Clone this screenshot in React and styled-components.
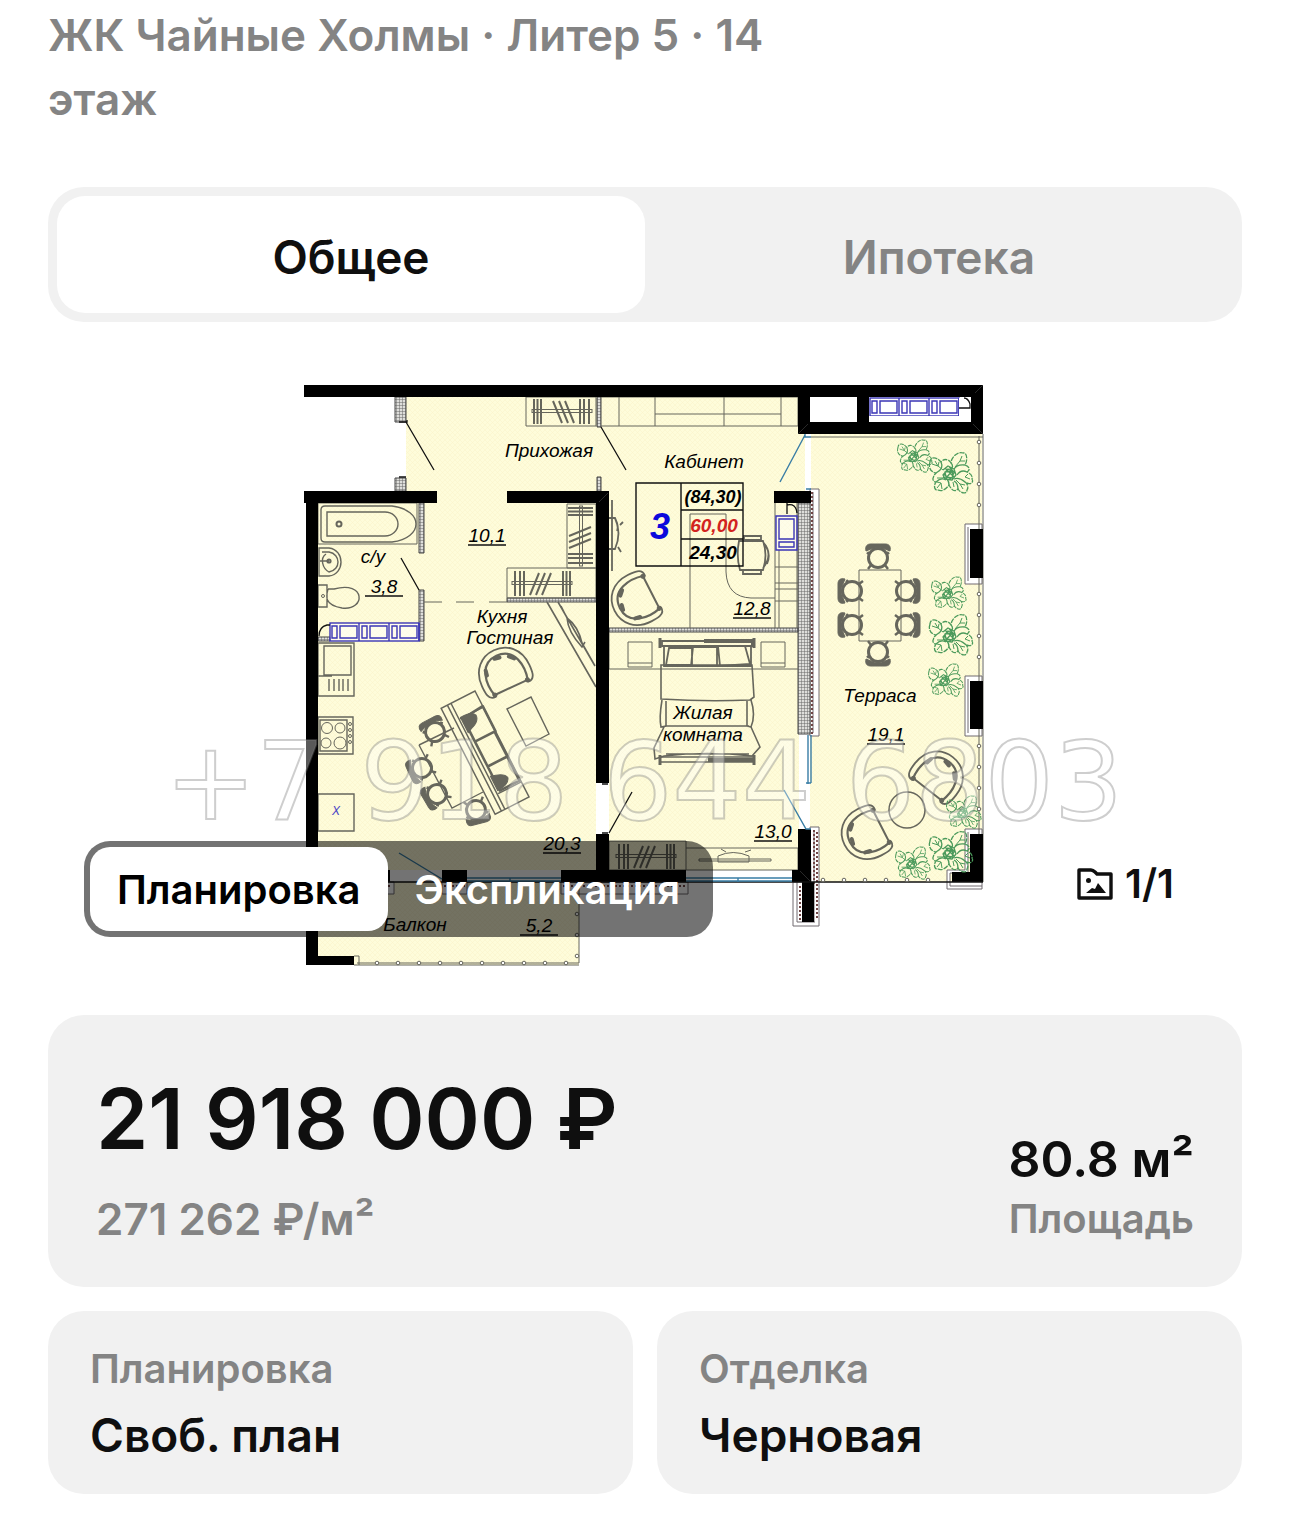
import React, { useState } from "react";
import styled, { createGlobalStyle } from "styled-components";

const color = {
  ink: "#0f0f0f",
  muted: "#848484",
  surface: "#f1f1f1",
  floor: "#fefcda",
  line: "#66665c",
  blue: "#3a35b5",
};

const GlobalStyle = createGlobalStyle`
  *, *::before, *::after { box-sizing: border-box; }
  body {
    margin: 0;
    background: #fff;
    color: ${color.ink};
    font-family: Inter, "Noto Sans", sans-serif;
    font-weight: 600;
  }
  h1, p, dl, dd, dt, figure { margin: 0; }
  button { font: inherit; border: 0; background: none; cursor: pointer; }
`;

const Page = styled.main`
  padding: 3px 48px 20px;
`;

const Title = styled.h1`
  max-width: 740px;
  color: ${color.muted};
  font-size: 44px;
  line-height: 64px;
  font-weight: 600;
`;

const Tabs = styled.div`
  display: flex;
  margin-top: 56px;
  padding: 9px;
  border-radius: 36px;
  background: ${color.surface};
`;

const Tab = styled.button`
  flex: 1;
  height: 117px;
  padding: 4px 0 0;
  border-radius: 28px;
  background: ${(p) => (p.$active ? "#fff" : "transparent")};
  color: ${(p) => (p.$active ? color.ink : color.muted)};
  font-size: 46px;
`;

const Gallery = styled.figure`
  position: relative;
  margin: 23px 0 24px;
`;

const Drawing = styled.svg`
  display: block;
  width: 100%;
  height: auto;
`;

const ViewSwitch = styled.div`
  position: absolute;
  left: 36px;
  bottom: 54px;
  display: flex;
  padding: 6px;
  border-radius: 26px;
  background: rgba(0, 0, 0, 0.55);
`;

const ViewButton = styled.button`
  height: 84px;
  padding: 0 27px;
  border-radius: 20px;
  background: ${(p) => (p.$active ? "#fff" : "transparent")};
  color: ${(p) => (p.$active ? "#000" : "#fff")};
  font-size: 40px;
`;

const Counter = styled.figcaption`
  position: absolute;
  right: 68px;
  bottom: 83px;
  display: flex;
  align-items: center;
  gap: 12px;
  font-size: 40px;
  line-height: 48px;
`;

const PriceCard = styled.section`
  display: flex;
  justify-content: space-between;
  align-items: flex-end;
  padding: 52px 48px 40px;
  border-radius: 36px;
  background: ${color.surface};
`;

const Price = styled.p`
  font-size: 84px;
  line-height: 104px;
  font-weight: 600;
`;

const PricePerMeter = styled.p`
  margin-top: 20px;
  color: ${color.muted};
  font-size: 44px;
  line-height: 56px;
`;

const Area = styled.dl`
  display: flex;
  flex-direction: column-reverse;
  text-align: right;
`;

const AreaValue = styled.dd`
  font-size: 50px;
  line-height: 64px;
`;

const AreaLabel = styled.dt`
  color: ${color.muted};
  font-size: 40px;
  line-height: 56px;
`;

const Facts = styled.dl`
  display: grid;
  grid-template-columns: 1fr 1fr;
  gap: 24px;
  margin-top: 24px;
`;

const Fact = styled.div`
  padding: 32px 42px 27px;
  border-radius: 36px;
  background: ${color.surface};
`;

const FactLabel = styled.dt`
  color: ${color.muted};
  font-size: 40px;
  line-height: 52px;
`;

const FactValue = styled.dd`
  margin-top: 8px;
  font-size: 46px;
  line-height: 64px;
`;

const RoomText = styled.text`
  font-family: "Liberation Sans", Arial, sans-serif;
  font-style: italic;
  font-weight: ${(p) => (p.$bold ? 700 : 400)};
  font-size: ${(p) => p.$size || 19}px;
  text-anchor: middle;
  fill: ${(p) => p.$fill || "#000"};
`;

const Watermark = styled.text`
  font-family: "DejaVu Sans", sans-serif;
  font-size: 109px;
  font-weight: 400;
  fill: rgba(255, 255, 255, 0.35);
  stroke: rgba(120, 120, 120, 0.36);
  stroke-width: 2px;
`;

const ROOMS = [
  ["Прихожая", 549, 457], ["Кабинет", 704, 468], ["с/у", 373, 563],
  ["Кухня", 502, 623], ["Гостиная", 510, 644], ["Жилая", 703, 719],
  ["комната", 703, 741], ["Терраса", 880, 702], ["Балкон", 415, 931],
];

const AREAS = [
  ["10,1", 487, 542], ["3,8", 384, 593], ["12,8", 752, 615], ["20,3", 562, 850],
  ["13,0", 773, 838], ["19,1", 886, 741], ["5,2", 539, 932],
];

const WALLS = [
  [304, 385, 679, 12], [798, 397, 12, 37], [857, 397, 12, 26], [971, 397, 12, 37],
  [798, 422, 185, 12], [304, 491, 133, 12], [507, 491, 102, 12], [306, 491, 12, 474],
  [596, 503, 13, 280], [596, 834, 13, 36], [306, 870, 84, 12], [442, 870, 25, 12],
  [561, 870, 125, 12], [792, 870, 19, 12], [798, 829, 13, 42], [802, 882, 12, 40],
  [306, 956, 48, 9], [774, 491, 37, 12], [970, 529, 13, 49], [970, 681, 13, 48],
  [970, 834, 13, 48], [952, 872, 31, 10],
];

function Chair({ x, y, r = 0 }) {
  return (
    <g transform={`translate(${x} ${y}) rotate(${r})`} fill="none" stroke={color.line}>
      <circle r="9.5" strokeWidth="3" />
      <path d="M-12-7C-13-12-11-14-7-14H7C11-14 13-12 12-7L7-9Q0-12-7-9z" fill={color.line} strokeWidth="1" />
      <path d="M-7 7l-3 4M7 7l3 4M-9-6l-2 2M9-6l2 2" strokeWidth="2.4" />
    </g>
  );
}

function Armchair({ x, y, r }) {
  return (
    <g transform={`translate(${x} ${y}) rotate(${r})`} fill="none" stroke={color.line} strokeLinecap="round">
      <path d="M-18 19C-26 20-26 10-26 4-26-14-14-24 0-24S26-14 26 4C26 10 26 20 18 19" strokeWidth="1.8" />
      <path d="M-18 18C-22 4-20-18 0-18S22 4 18 18" strokeWidth="2.2" />
      <path d="M-18 17H18" strokeWidth="2" />
      <path d="M-17-4l1-5M11-12l4 4M-3-16l5 1" strokeWidth="4" />
      <circle cx="-18" cy="17" r="2" fill={color.line} />
      <circle cx="18" cy="17" r="2" fill={color.line} />
    </g>
  );
}

function Hangers({ x, y, r = 0, flip = 1 }) {
  return (
    <g transform={`translate(${x} ${y}) rotate(${r}) scale(${flip} 1)`} fill="none" stroke={color.line}>
      <rect x="-30" y="-1.5" width="60" height="3" />
      <path d="M-28-12v25M-24.500-12v25M-21-12v25M18-12v25M22-12v25M27-12v25" strokeWidth="2" />
      <path d="M-9-10l9 22M-3-10l9 22M3-10l9 22" strokeWidth="2" />
    </g>
  );
}

function Plant({ x, y, s = 1 }) {
  return (
    <g transform={`translate(${x} ${y}) scale(${s})`} fill="none" stroke="#4b9a5b" strokeWidth="1.3" strokeLinejoin="round">
      <path d="M-20-12C-22-6-19-2-14-1C-18 3-18 8-14 8C-17 12-15 17-12 16C-7 18-3 14-1 11C2 17 5 18 8 15C11 20 17 20 17 16C19 13 17 9 15 8C21 12 24 8 22 5C23 2 20-1 17-2C21-4 19-8 15-9C18-14 17-22 13-21C7-23 1-16 1-11C-2-16-7-15-9-12C-14-18-20-17-20-12z" strokeDasharray="5 1" />
      <path d="M-14-1C-10-3-6-6-9-12M-1 11C-1 7-3 4-7 3M-14 8q5-5 10-2M15 8Q9 3 4 5M8 15Q8 9 4 7M15-9Q7-10 4-5M1-11q3 3 0 7M17-2Q11-5 7 1" />
      <path d="M-18-10l6 2 1-4M-15-13l3 5 5 4M-13 14l4-5-4-1M-9 9l1 6M13 15l-3-5 5 1M10 10L6 6M12-18l-2 5 5 0M10-13L5-7M20 5l-5-2 3-3M-13 4h6M4 13l-1-5" strokeWidth="1" />
      <path d="M-7-4l5-4 6 3 2 6-4 5-7-1-2-4 5-6 6 3-2 6-6-1-1-5 7-1 1 5M-5-6l9 9M-7 0l8 5M-1-7l6 6M-4 4l7-8" />
    </g>
  );
}

function Vent({ x, y }) {
  return (
    <g transform={`translate(${x} ${y})`} fill="none" stroke={color.blue} strokeWidth="1.400">
      <rect width="89" height="18" fill="#fff" fillOpacity=".5" />
      {[0, 30, 60].map((o) => (
        <path key={o} d={`M${o + 2} 3h5v12h-5zM${o + 10} 3h17v12h-17zM${o + 29} 0v18`} />
      ))}
    </g>
  );
}

function Rail({ from, to, at, vertical }) {
  const dots = [];
  for (let p = from; p <= to; p += 21) dots.push(p);
  return dots.map((p) => (
    <circle key={p} cx={vertical ? at : p} cy={vertical ? p : at} r="1.800" fill="#fff" stroke={color.line} />
  ));
}

function FloorPlan() {
  return (
    <Drawing viewBox="48 345 1194 646" role="img" aria-label="План квартиры">
      <defs>
        <pattern id="floor" width="5" height="5" patternUnits="userSpaceOnUse">
          <rect width="5" height="5" fill={color.floor} />
          <path d="M0 0l5 5M5 0L0 5" stroke="#faf3c8" strokeWidth=".5" />
        </pattern>
        <pattern id="masonry" width="3" height="3" patternUnits="userSpaceOnUse">
          <rect width="3" height="3" fill="#dededb" />
          <path d="M0 0h3M0 0v3" stroke="#686868" strokeWidth="1" />
        </pattern>
      </defs>

      <path d="M406 397h392v37h184v448H810v-12H579v95H318V503h88z" fill="url(#floor)" />
      <path d="M596 783h13v51h-13zM390 870h52v12h-52zM467 870h94v12h-94zM686 870h106v12H686zM805 434h6v57h-6zM799 734h11v95h-11z" fill="#fff" />

      <g fill="#fff" stroke="#706b70">
        <path d="M810 489h9v247h-9zM813 492v241M810 827h9v99h-26v-44h18zM814 830v92M797 882v40h18" />
        <path d="M965 524h17v60h-17zM965 676h17v60h-17zM965 829h17v60h-35v-19h18zM968 832v41h-18v13h32M968 527v54M968 679v54" />
        <path d="M318 882h76v12h-76zM442 882h25v12h-25zM561 882h127v12H561z" />
      </g>
      <path d="M812 492v242M814 830v55M800 886v34M817 832v88M320 886h72M444 886h21M563 886h123" stroke="#704545" strokeWidth="2" strokeDasharray="2 2" fill="none" />

      <g fill="url(#masonry)" stroke="#444" strokeWidth="1">
        <path d="M395 397h11v25h-11zM395 478h11v13h-11zM798 503h12v231h-12zM419 503h5v50h-5zM419 590h5v51h-5zM597 397h4v30h-4zM597 477h4v14h-4zM507 598h89v4h-89zM609 628h189v4H609zM318 637h12v4h-12z" />
      </g>

      <g fill="none" stroke={color.line} strokeWidth="1">
        <path d="M526 397h70v29h-70zM601 397h197v29H601M619 397v29M655 397v29M724 397v29M781 397v29M655 414h126" />
        <path d="M567 504h29v64h-29zM507 568h89v30h-89zM318 503h99v41h-99zM797 503v125M775 503v125M779 550v78M775 567h23M775 583h23M775 589h23M775 601h23" />
        <path d="M327 512h58a13 12 0 010 24h-58zM325 506h67c32 4 32 32 0 36h-67q-4 0-4-4v-28q0-4 4-4" strokeWidth="1.4" />
        <circle cx="339" cy="524" r="2.500" strokeWidth="2" />
        <path d="M319 548h10c16 2 16 26 0 28h-10zM322 552h7c12 2 12 18 0 20-7-4-9-14-3-18M320 561h9" strokeWidth="1.4" />
        <circle cx="329" cy="561" r="1.600" strokeWidth="2" />
        <path d="M318 585h9v22h-9zM328 589h6c32-9 32 22 8 19-18-3-16-12-14-19" strokeWidth="1.4" />
        <circle cx="323" cy="596" r="1.500" />
        <path d="M318 643h36v53h-36zM324 646h27v29h-27zM318 676h14M329 679v12M334 679v12M339 679v12M343 679v12M348 679v12M318 717h35v37h-35zM320 720h27v31h-27zM318 794h36v37h-36z" strokeWidth="1.4" />
        <circle cx="327" cy="728" r="5.500" /><circle cx="340" cy="728" r="5" />
        <circle cx="326" cy="743" r="5" /><circle cx="340" cy="743" r="6" />
        <circle cx="350" cy="724" r="1.500" /><circle cx="350" cy="730" r="1.500" /><circle cx="350" cy="736" r="1.500" /><circle cx="350" cy="742" r="1.500" />
        <path d="M424 602h18M456 602h18M489 602h18" />
        <path d="M547 602l49 85M558 602l37 64M561 606l6 12q11 8 15 25l13 23M567 618q1 14 15 29l3-5" strokeWidth="1.6" />
        <path d="M690 514h36v58q1 25 25 26h24M690 514v114" />
        <path d="M612 500v71M609 518h6q7 15 0 31h-6M615 518q4 8 2 13M620 525l3-3M618 547l3 5" strokeWidth="1.8" />
        <path d="M739 541q-3 15 1 29h23q5-15 0-29zM744 536h17v4h-17zM743 570h18v4h-18zM763 542q11 12 0 26M766 546q5 9 1 18" strokeWidth="1.8" />
        <path d="M609 632v37h189M628 642h24v25h-24zM628 663h24M761 642h24v25h-24zM761 663h24" />
        <path d="M662 641h91v5h-91zM664 645v21h87v-21M669 648h23v17h-26zM693 647h24v19h-26zM718 646h27l5 18-30 2z" strokeWidth="1.8" />
        <path d="M704 641h49v5" strokeWidth="4" />
        <path d="M661 665h91q1 17 2 32l-4 3q-43 2-89-1zM662 700q-3 18-1 27l5-1V701M751 700q5 15 0 27l-4-1V701M665 726h84M664 727l-10 21 1 11 9-3q43-5 88 0l8-9-9-20M666 754h83" strokeWidth="1.6" />
        <path d="M660 757h94v5h-94z" strokeWidth="1.600" /><path d="M708 760h46" strokeWidth="4" />
        <path d="M660 638v10M754 638v10M660 755v10M754 755v10" strokeWidth="3" />
        <path d="M609 841h77v29h-77zM686 848h112v22H686M699 859h72v2h-72zM718 856q15-7 31 0v6h-31zM721 849l5 3M745 852l6-2" />
        <path d="M859 570h42v71h-42z" /><circle cx="907" cy="810" r="18" strokeWidth="1.500" />
        <path d="M507 709l24-12 18 37-23 12zM419 745l35-17M419 745l33 63 31-16" strokeWidth="1.4" />
        <path d="M979 436v446M983 434v448M811 437h172M354 956h5v9M357 963h222v-81M354 965h225" />
      </g>

      <g transform="translate(475 691) rotate(63)" fill="none" stroke={color.line}>
        <path d="M0 0h119v38H0zM18 0v26M102 0v26M0 27h119M0 31h119" strokeWidth="1.500" />
        <path d="M17 0h28v23H19zM45 1h28v22H45zM73 1h27v22H73z" strokeWidth="2.600" strokeLinejoin="round" />
        <path d="M17 25q-1-13 5-15 6 0 9 8l3 7zM83 25q3-14 9-15 7 2 7 15z" fill={color.line} />
      </g>

      <Chair x={878} y={558} /><Chair x={878} y={652} r={180} />
      <Chair x={852} y={591} r={-90} /><Chair x={852} y={625} r={-90} />
      <Chair x={906} y={591} r={90} /><Chair x={906} y={625} r={90} />
      <Chair x={435} y={732} r={-28} /><Chair x={422} y={768} r={-115} />
      <Chair x={437} y={794} r={-120} /><Chair x={476} y={810} r={165} />
      <Armchair x={504} y={672} r={-25} /><Armchair x={636} y={600} r={-117} />
      <Armchair x={938} y={776} r={38} /><Armchair x={866} y={834} r={-117} />
      <Hangers x={562} y={411} /><Hangers x={581} y={536} r={90} />
      <Hangers x={542} y={583} flip={-1} /><Hangers x={646} y={856} flip={-1} />
      <Vent x={330} y={623} /><Vent x={870} y={398} />
      <path d="M776 516h21v34h-21zM779 519h15v20h-15zM779 542h15v5h-15z" fill="#fff" fillOpacity=".4" stroke={color.blue} strokeWidth="1.400" />

      <path d="M810 397h47v25h-47zM959 398h12v24H869v-6h90z" fill="#fff" />
      <g fill="#000">
        {WALLS.map(([x, y, w, h]) => <rect key={`${x}-${y}`} x={x} y={y} width={w} height={h} />)}
      </g>
      <path d="M959 408h11v-4q-2-6-6-6M787 503v11M787 505q9-2 10 8M319 636q0-9 8-11h3M406 422l28 48M601 427l25 43M401 558l18 32M609 833l23-41M399 422h8v-2M399 477h7M602 784h6M602 833h6M318 882h665" fill="none" stroke="#111" strokeWidth="1.300" />
      <path d="M805 435l-25 47M805 434v3h6M806 489h5M399 853l43 26M467 878h94M467 881h94M510 878v4M686 878h106M686 881h106M738 878v4M808 735v49M811 735v48M806 783h5M784 790l22 39h5" fill="none" stroke="#397da5" strokeWidth="1.400" />
      <path d="M975 393l8-8M798 434l10-10M973 424l10 10M599 502l9-9M800 871l10 10" stroke="#444" strokeWidth=".6" />

      <Plant x={914} y={457} s={0.8} /><Plant x={950} y={474} />
      <Plant x={948} y={594} s={0.8} /><Plant x={950} y={636} />
      <Plant x={945} y={681} s={0.8} /><Plant x={963} y={813} s={0.8} />
      <Plant x={950} y={853} /><Plant x={912} y={864} s={0.8} />
      <Rail vertical at={979} from={442} to={522} />
      <Rail vertical at={979} from={594} to={672} />
      <Rail vertical at={979} from={746} to={824} />
      <Rail vertical at={577} from={914} to={960} />
      <Rail at={963} from={377} to={572} />
      <Rail at={880} from={823} to={940} />

      <path d="M636 483h107v83H636zM681 483v83M681 510h62M681 539h62" fill="none" stroke="#111" strokeWidth="1.400" />
      <RoomText x="660" y="539" $bold $size={36}  $fill="#0b09dc">3</RoomText>
      <RoomText x="713" y="503" $bold $size={18}>(84,30)</RoomText>
      <RoomText x="714" y="532" $bold $size={19} $fill="#d2231f">60,00</RoomText>
      <RoomText x="713" y="559" $bold $size={19}>24,30</RoomText>
      <RoomText x="336" y="815" $size={12} $fill="#4742c5">X</RoomText>
      {ROOMS.map(([name, x, y]) => <RoomText key={name} x={x} y={y}>{name}</RoomText>)}
      {AREAS.map(([value, x, y]) => (
        <g key={value}>
          <RoomText x={x} y={y}>{value}</RoomText>
          <path d={`M${x - 19} ${y + 3}h38`} stroke="#111" strokeWidth="1.400" />
        </g>
      ))}
      <Watermark x="165" y="819">+7 918 644 6803</Watermark>
    </Drawing>
  );
}

function GalleryIcon() {
  return (
    <svg width="36" height="32" viewBox="0 0 36 32" aria-hidden="true">
      <path d="M2 2h12q2 0 4 2l2 2h14v24H2z" fill="none" stroke={color.ink} strokeWidth="3.400" strokeLinejoin="round" />
      <circle cx="11.500" cy="12.500" r="2.500" fill={color.ink} />
      <path d="M9 25l6-5 3 1 3-6 8 10z" fill={color.ink} />
    </svg>
  );
}

const FACTS = [
  { label: "Планировка", value: "Своб. план" },
  { label: "Отделка", value: "Черновая" },
];

export default function App() {
  const [tab, setTab] = useState("Общее");
  const [view, setView] = useState("Планировка");
  return (
    <>
      <GlobalStyle />
      <Page>
        <Title>ЖК Чайные Холмы · Литер 5 · 14 этаж</Title>
        <Tabs role="tablist">
          {["Общее", "Ипотека"].map((name) => (
            <Tab key={name} role="tab" aria-selected={tab === name} $active={tab === name} onClick={() => setTab(name)}>
              {name}
            </Tab>
          ))}
        </Tabs>
        <Gallery>
          <FloorPlan />
          <ViewSwitch>
            {["Планировка", "Экспликация"].map((name) => (
              <ViewButton key={name} aria-pressed={view === name} $active={view === name} onClick={() => setView(name)}>
                {name}
              </ViewButton>
            ))}
          </ViewSwitch>
          <Counter><GalleryIcon />1/1</Counter>
        </Gallery>
        <PriceCard>
          <div>
            <Price>21 918 000 ₽</Price>
            <PricePerMeter>271 262 ₽/м²</PricePerMeter>
          </div>
          <Area>
            <AreaLabel>Площадь</AreaLabel>
            <AreaValue>80.8 м²</AreaValue>
          </Area>
        </PriceCard>
        <Facts>
          {FACTS.map((fact) => (
            <Fact key={fact.label}>
              <FactLabel>{fact.label}</FactLabel>
              <FactValue>{fact.value}</FactValue>
            </Fact>
          ))}
        </Facts>
      </Page>
    </>
  );
}
